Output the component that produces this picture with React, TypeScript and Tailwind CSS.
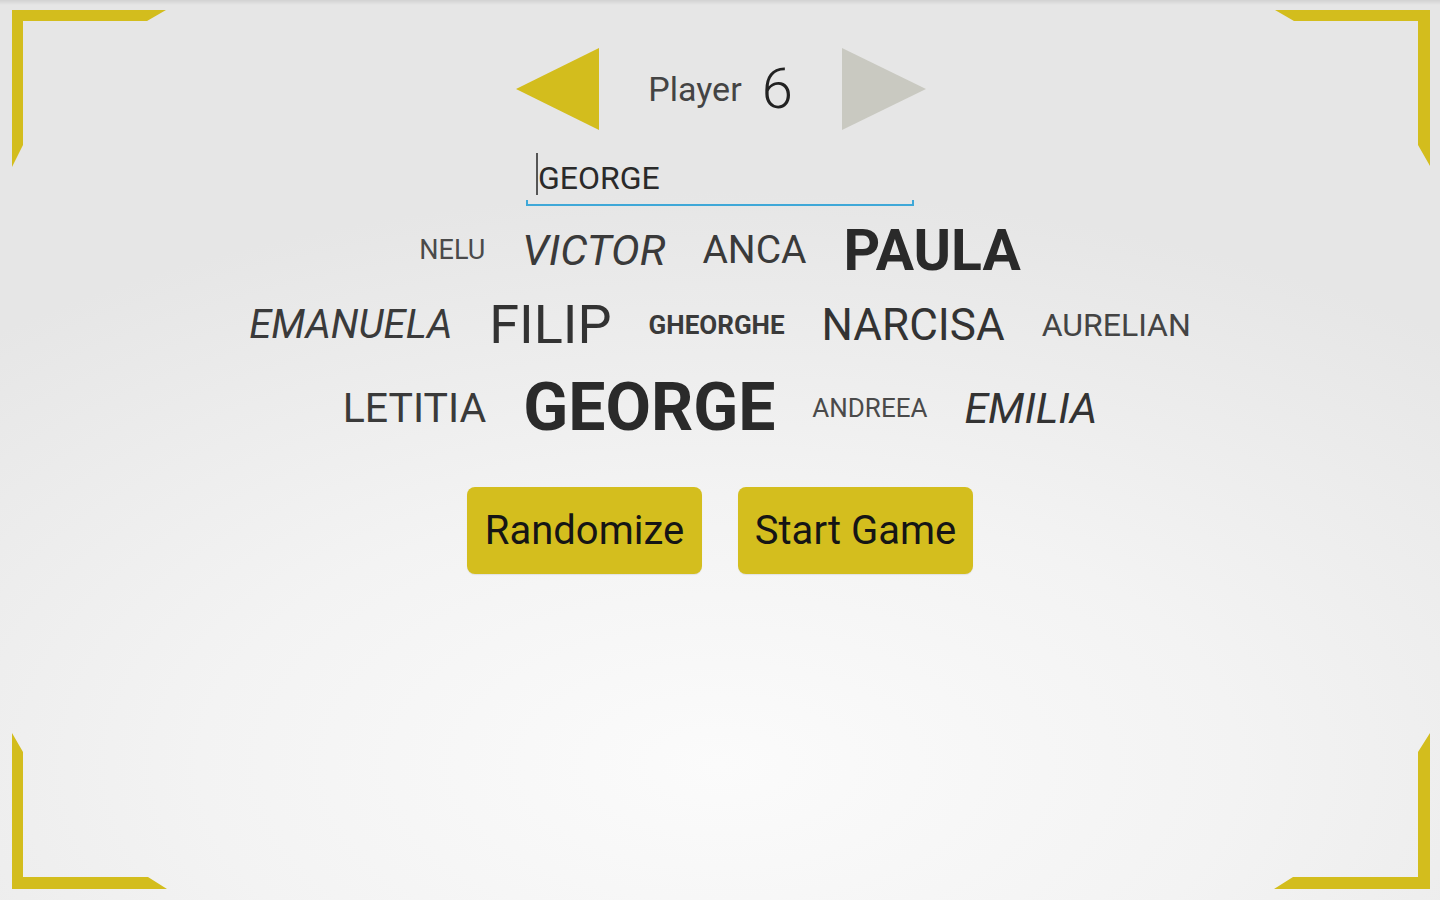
import React from 'react';

const gold = '#d3bd1d';

const rows = [
  [
    { t: 'NELU', c: 'text-[27px] font-normal text-[#4a4a4a]' },
    { t: 'VICTOR', c: 'text-[43px] font-normal italic text-[#3a3a3a]' },
    { t: 'ANCA', c: 'text-[39px] font-normal text-[#3a3a3a]' },
    { t: 'PAULA', c: 'text-[57px] font-bold text-[#2a2a2a]' },
  ],
  [
    { t: 'EMANUELA', c: 'text-[40px] font-normal italic text-[#3a3a3a]' },
    { t: 'FILIP', c: 'text-[54px] font-normal text-[#333]' },
    { t: 'GHEORGHE', c: 'text-[26px] font-bold text-[#3a3a3a]' },
    { t: 'NARCISA', c: 'text-[44px] font-normal text-[#333]' },
    { t: 'AURELIAN', c: 'text-[32px] font-normal text-[#444]' },
  ],
  [
    { t: 'LETITIA', c: 'text-[41px] font-normal text-[#3a3a3a]' },
    { t: 'GEORGE', c: 'text-[66px] font-bold text-[#2a2a2a]' },
    { t: 'ANDREEA', c: 'text-[26px] font-normal text-[#4a4a4a]' },
    { t: 'EMILIA', c: 'text-[43px] font-normal italic text-[#333]' },
  ],
];

const rowHeights = ['h-[88px]', 'h-[62px]', 'h-[104px]'];

function Corners() {
  return (
    <svg className="absolute inset-0 pointer-events-none" width="1440" height="900" viewBox="0 0 1440 900">
      <polygon points="12,10 166,10 147,21 23,21 23,145 12,167" fill={gold} />
      <polygon points="1275,10 1430,10 1430,166 1418,145 1418,21 1294,21" fill={gold} />
      <polygon points="12,733 23,752 23,877 148,877 167,889 12,889" fill={gold} />
      <polygon points="1430,733 1430,889 1274,889 1293,877 1418,877 1418,752" fill={gold} />
    </svg>
  );
}

export default function App() {
  return (
    <div
      className="relative w-[1440px] h-[900px] overflow-hidden bg-[radial-gradient(ellipse_90%_75%_at_50%_85%,#fbfbfb_0%,#f3f3f3_40%,#e6e6e6_85%)] font-['Roboto','Liberation_Sans',sans-serif]"
    >
      <div className="absolute inset-x-0 top-0 h-[5px] bg-gradient-to-b from-[#d2d2d2] to-transparent" />
      <Corners />

      <div className="relative flex flex-col items-center pt-[48px]">
        {/* player selector */}
        <div className="flex items-center h-[82px] gap-[49px] pl-[2px]">
          <svg width="83" height="82" viewBox="0 0 83 82">
            <polygon points="0,41 83,0 83,82" fill={gold} />
          </svg>
          <div className="flex items-center gap-[20px]">
            <span className="text-[34px] text-[#444] leading-none">Player</span>
            <span className="text-[56px] font-light text-[#222] leading-none">6</span>
          </div>
          <svg width="84" height="82" viewBox="0 0 84 82">
            <polygon points="0,0 84,41 0,82" fill="#c9c9c1" />
          </svg>
        </div>

        {/* name input */}
        <div className="w-[388px] h-[76px] flex flex-col justify-end">
          <div className="flex items-center h-[44px] pl-[10px]">
            <div className="w-[2px] h-[42px] bg-[#555]" />
            <span className="text-[32px] text-[#2a2a2a] leading-none pt-[7px]">GEORGE</span>
          </div>
          <div className="h-[6px] mt-[4px] border-x-2 border-b-2 border-[#3fa8d8]" />
        </div>

        {/* word cloud */}
        {rows.map((row, i) => (
          <div key={i} className={`flex items-center justify-center gap-[37px] ${rowHeights[i]}`}>
            {row.map((w) => (
              <span key={w.t} className={`leading-none ${w.c}`}>
                {w.t}
              </span>
            ))}
          </div>
        ))}

        {/* buttons */}
        <div className="flex gap-[36px] mt-[27px]">
          <button className="w-[235px] h-[87px] rounded-[8px] bg-[#d4be1e] text-[40px] text-[#151515] shadow-[0_1px_1px_rgba(0,0,0,0.08)]">
            Randomize
          </button>
          <button className="w-[235px] h-[87px] rounded-[8px] bg-[#d4be1e] text-[40px] text-[#151515] shadow-[0_1px_1px_rgba(0,0,0,0.08)]">
            Start Game
          </button>
        </div>
      </div>
    </div>
  );
}
